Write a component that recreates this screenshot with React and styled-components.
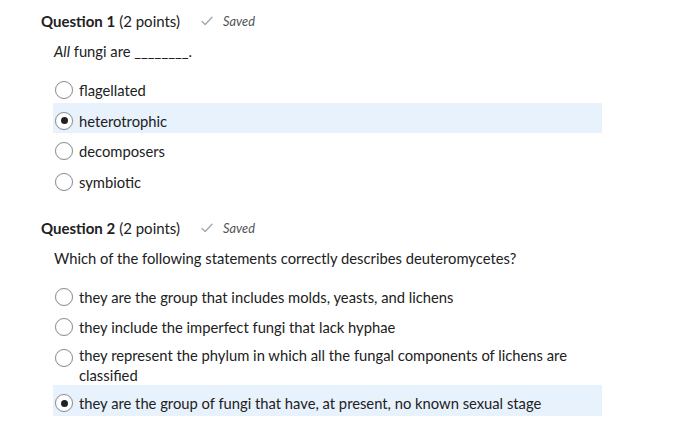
import React from 'react'
import styled, { createGlobalStyle } from 'styled-components'

const GlobalStyle = createGlobalStyle`
  body {
    margin: 0;
    background: #ffffff;
    font-family: Lato, "Noto Sans", sans-serif;
    color: #202122;
  }
`

const Page = styled.div`
  padding: 11px 0 0 41px;
`

const Question = styled.section`
  margin-bottom: 23px;
`

const Header = styled.div`
  display: flex;
  align-items: center;
  height: 20px;
  font-size: 15px;
  line-height: 20px;
`

const Title = styled.span`
  font-weight: 700;
`

const Points = styled.span`
  font-weight: 400;
  margin-left: 4px;
`

const SavedTag = styled.span`
  display: flex;
  align-items: center;
  margin-left: 21px;
  font-size: 12.8px;
  font-style: italic;
  color: #4f5356;
  gap: 10px;
`

const Prompt = styled.div`
  margin: 10px 0 11px 13px;
  font-size: 14.75px;
  line-height: 20px;
`

const Options = styled.div`
  margin-left: 12px;
  width: 549px;
`

const Option = styled.label`
  display: flex;
  align-items: center;
  box-sizing: border-box;
  min-height: 30.7px;
  padding: 5px 4px 0 2px;
  background: ${p => (p.$selected ? '#e8f2fd' : 'transparent')};
  font-size: 14.75px;
  line-height: 20px;
`

const Radio = styled.span`
  flex: none;
  align-self: flex-start;
  box-sizing: border-box;
  width: 18px;
  height: 18px;
  margin: 4px 6px 0 0;
  border: 1px solid #8b9093;
  border-radius: 50%;
  background: #fff;
  box-shadow: 0 0 1px rgba(0, 0, 0, 0.15);
  display: flex;
  align-items: center;
  justify-content: center;

  &::after {
    content: '';
    width: 7px;
    height: 7px;
    border-radius: 50%;
    background: ${p => (p.$checked ? '#202122' : 'transparent')};
  }
`

const OptionText = styled.span`
  flex: 1;
`

const Check = () => (
  <svg width="12" height="10" viewBox="0 0 12 10">
    <polyline points="1,5.5 4.2,8.5 11,1.2" fill="none" stroke="#a3a8ab" strokeWidth="1.4" strokeLinecap="round" strokeLinejoin="round" />
  </svg>
)

const questions = [
  {
    n: 1,
    prompt: (
      <>
        <em>All</em> fungi are ________.
      </>
    ),
    options: ['flagellated', 'heterotrophic', 'decomposers', 'symbiotic'],
    selected: 1,
  },
  {
    n: 2,
    prompt: 'Which of the following statements correctly describes deuteromycetes?',
    options: [
      'they are the group that includes molds, yeasts, and lichens',
      'they include the imperfect fungi that lack hyphae',
      'they represent the phylum in which all the fungal components of lichens are classified',
      'they are the group of fungi that have, at present, no known sexual stage',
    ],
    selected: 3,
  },
]

export default function App() {
  return (
    <Page>
      <GlobalStyle />
      {questions.map(q => (
        <Question key={q.n}>
          <Header>
            <Title>Question {q.n}</Title>
            <Points>(2 points)</Points>
            <SavedTag>
              <Check />
              Saved
            </SavedTag>
          </Header>
          <Prompt>{q.prompt}</Prompt>
          <Options>
            {q.options.map((o, i) => (
              <Option key={o} $selected={i === q.selected}>
                <Radio $checked={i === q.selected} />
                <OptionText>{o}</OptionText>
              </Option>
            ))}
          </Options>
        </Question>
      ))}
    </Page>
  )
}
